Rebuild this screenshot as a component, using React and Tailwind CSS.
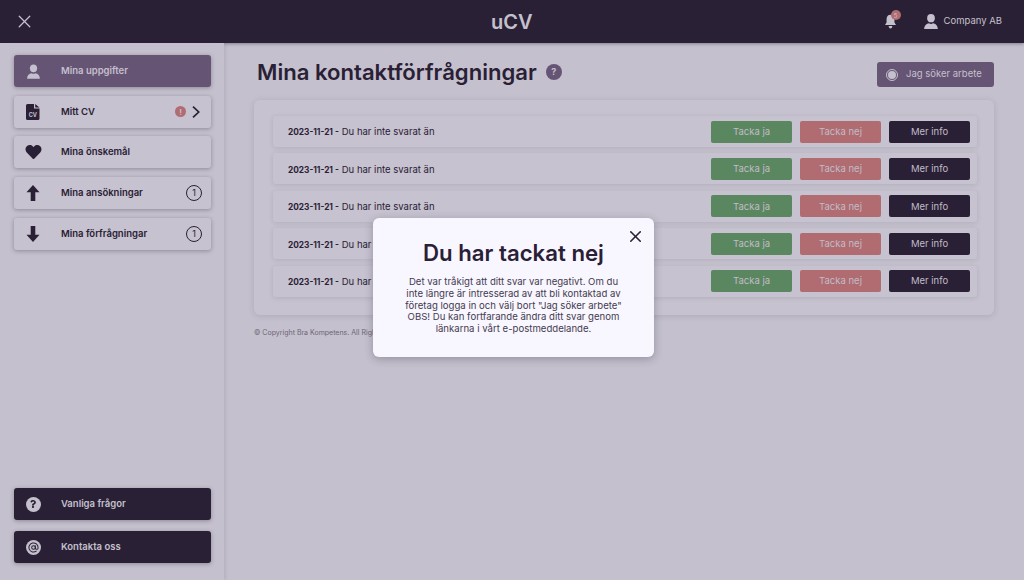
import { X, AtSign } from "lucide-react";
import { FaHeart, FaQuestion } from "react-icons/fa";

const PersonIcon = ({ className }) => (
  <svg viewBox="0 0 20 20" className={className} fill="currentColor">
    <ellipse cx="10" cy="5.8" rx="4.8" ry="5.2" />
    <path d="M1.500 19.500c0-4.600 3-7 6-7.300.6.5 1.500.8 2.500.8s1.900-.3 2.500-.8c3 .3 6 2.700 6 7.300z" />
  </svg>
);

const BellIcon = () => (
  <svg viewBox="0 0 12 16" className="w-[11px] h-[15px]" fill="currentColor">
    <path d="M6 .5c2.800 0 4.300 2.200 4.300 5v3.600L12 11.800H0l1.700-2.700V5.500C1.700 2.700 3.200.5 6 .5z" />
    <path d="M4 13h4c0 1.500-.8 2.500-2 2.500S4 14.500 4 13z" />
  </svg>
);

const CvIcon = () => (
  <svg viewBox="0 0 14 16" className="w-[14px] h-[16px]">
    <path d="M1.500 0H8v4.500h5.500V14.500a1.500 1.500 0 0 1-1.500 1.500H1.500A1.500 1.500 0 0 1 0 14.500V1.500A1.500 1.500 0 0 1 1.500 0z" fill="#2a2035" />
    <path d="M9.200 0l4.300 3.400H9.200z" fill="#2a2035" />
    <text x="6.800" y="13.400" fontSize="5.600" fontWeight="700" fill="#c4c0cd" textAnchor="middle" fontFamily="Inter, sans-serif">CV</text>
  </svg>
);

const ArrowUp = () => (
  <svg viewBox="0 0 14 16" className="w-[14px] h-[16px]" fill="currentColor">
    <path d="M7 0l6.500 7.300H9.300V16H4.700V7.300H.5z" />
  </svg>
);

const ArrowDown = () => (
  <svg viewBox="0 0 14 16" className="w-[14px] h-[16px]" fill="currentColor">
    <path d="M7 16L.5 8.700h4.200V0h4.600v8.700h4.200z" />
  </svg>
);

const Chevron = () => (
  <svg viewBox="0 0 8 12" className="w-[8px] h-[12px] ml-[6px] mr-[11px]" fill="none" stroke="currentColor" strokeWidth="1.700">
    <path d="M1 .7L6.700 6 1 11.300" />
  </svg>
);

const Count = () => (
  <span className="ml-auto mr-[9px] w-4 h-4 rounded-full border border-[#2a2035] flex items-center justify-center text-[9px] text-[#2a2035]">1</span>
);

const NavItem = ({ icon, label, children, dark, active }) => (
  <div
    className={`h-[32px] w-[197px] flex items-center rounded-[3px] shadow-[0_1px_4px_rgba(42,32,53,0.35)] ${
      active ? "bg-[#665474] text-[#c4c0cd]" : dark ? "bg-[#2a2035] text-[#c4c0cd]" : "bg-[#c6c2cf] text-[#2a2035]"
    }`}
  >
    <span className="w-[47px] flex items-center justify-center shrink-0 pr-[9px]">{icon}</span>
    <span className="text-[9.500px] font-semibold">{label}</span>
    {children}
  </div>
);

const Row = () => (
  <div className="h-[31px] flex items-center pl-[15px] pr-[7px] rounded-[3px] bg-[#c6c2cf] shadow-[0_1px_5px_rgba(42,32,53,0.12)]">
    <span className="text-[9.500px] text-[#2a2035] pt-[2px]">
      <b className="font-bold text-[8.300px] mr-[1px]">2023-11-21 - </b>Du har inte svarat än
    </span>
    <div className="ml-auto flex gap-[8px] text-[9.500px] text-[#c0bcc8]">
      <button className="w-[81px] h-[22px] pt-[1px] rounded-[2px] bg-[#5a875f]">Tacka ja</button>
      <button className="w-[81px] h-[22px] pt-[1px] rounded-[2px] bg-[#b06c70]">Tacka nej</button>
      <button className="w-[81px] h-[22px] pt-[1px] rounded-[2px] bg-[#2a2035]">Mer info</button>
    </div>
  </div>
);

export default function App() {
  return (
    <div className="relative w-[1024px] h-[580px] overflow-hidden bg-[#c4c0cd] font-['Inter',sans-serif] flex flex-col">
      <header className="h-[43px] shrink-0 bg-[#2a2035] flex items-center pl-[14px] pr-[22px] text-[#c4c0cd] shadow-[0_1px_3px_rgba(42,32,53,0.4)]">
        <X className="w-[21px] h-[21px]" strokeWidth={1.500} />
        <span className="absolute left-[491px] text-[20px] font-semibold">uCV</span>
        <div className="ml-auto relative mr-[27px]">
          <BellIcon />
          <span className="absolute -top-[4px] left-[6px] w-[10px] h-[10px] rounded-full bg-[#b06c70] text-[6px] flex items-center justify-center">5</span>
        </div>
        <PersonIcon className="w-[16px] h-[17px] mr-[5px]" />
        <span className="text-[9.500px]">Company AB</span>
      </header>

      <div className="flex-1 flex min-h-0">
        <aside className="w-[224px] shrink-0 bg-[#c4c0cd] shadow-[1px_0_4px_rgba(42,32,53,0.12)] pl-[14px] pt-[12px] pb-[17px] flex flex-col justify-between">
          <div className="flex flex-col gap-[8.700px]">
            <NavItem active label="Mina uppgifter" icon={<PersonIcon className="w-[15px] h-[17px] text-[#c4c0cd]" />} />
            <NavItem label="Mitt CV" icon={<CvIcon />}>
              <span className="ml-auto w-[11px] h-[11px] rounded-full bg-[#b06c70] text-[#c4c0cd] text-[8px] font-bold flex items-center justify-center">!</span>
              <Chevron />
            </NavItem>
            <NavItem label="Mina önskemål" icon={<FaHeart className="w-[17px] h-[16px]" />} />
            <NavItem label="Mina ansökningar" icon={<ArrowUp />}>
              <Count />
            </NavItem>
            <NavItem label="Mina förfrågningar" icon={<ArrowDown />}>
              <Count />
            </NavItem>
          </div>
          <div className="flex flex-col gap-[11px]">
            <NavItem
              dark
              label="Vanliga frågor"
              icon={
                <span className="w-[15px] h-[15px] rounded-full bg-[#c4c0cd] flex items-center justify-center">
                  <FaQuestion className="w-[8px] h-[8px] text-[#2a2035]" />
                </span>
              }
            />
            <NavItem
              dark
              label="Kontakta oss"
              icon={
                <span className="w-[15px] h-[15px] rounded-full bg-[#c4c0cd] flex items-center justify-center">
                  <AtSign className="w-[11px] h-[11px] text-[#2a2035]" strokeWidth={2.200} />
                </span>
              }
            />
          </div>
        </aside>

        <main className="flex-1 pl-[30px] pr-[30px]">
          <div className="h-[57px] flex items-start">
            <h1 className="mt-[15px] ml-[3px] text-[22.100px] leading-[28px] font-semibold text-[#2a2035]">Mina kontaktförfrågningar</h1>
            <span className="mt-[21px] ml-[9px] w-[16px] h-[16px] rounded-full bg-[#665474] text-[#c4c0cd] text-[9px] font-bold flex items-center justify-center">?</span>
            <button className="ml-auto mt-[19px] w-[117px] h-[25px] rounded-[3px] bg-[#665474] text-[#c4c0cd] text-[9.500px] flex items-center pl-[9px] gap-[8px]">
              <span className="w-[12px] h-[12px] rounded-full border border-[#c4c0cd] flex items-center justify-center">
                <span className="w-[8px] h-[8px] rounded-full bg-[#c4c0cd]" />
              </span>
              Jag söker arbete
            </button>
          </div>
          <section className="w-[740px] h-[215px] rounded-[6px] bg-[#c6c2cf] shadow-[0_1px_6px_rgba(42,32,53,0.14)] pt-[16px] pl-[19px] pr-[17px] flex flex-col gap-[6.400px]">
            <Row />
            <Row />
            <Row />
            <Row />
            <Row />
          </section>
          <p className="mt-[13px] text-[7px] text-[#6d6577]">© Copyright Bra Kompetens. All Rights Reserved</p>
        </main>
      </div>

      {/* modal */}
      <div className="absolute left-[373px] top-[218px] w-[281px] h-[139px] rounded-[6px] bg-[#f8f6ff] shadow-[0_2px_8px_rgba(42,32,53,0.3)] px-[30px] pt-[22px] text-center text-[#2a2035]">
        <X className="absolute right-[9px] top-[9px] w-[19px] h-[19px]" strokeWidth={2} />
        <h2 className="text-[22.200px] leading-[26px] font-semibold">Du har tackat nej</h2>
        <p className="mt-[10px] text-[9.600px] leading-[11.800px] text-[#443b4f] -mx-[10px]">
          Det var tråkigt att ditt svar var negativt. Om du
          <br />
          inte längre är intresserad av att bli kontaktad av
          <br />
          företag logga in och välj bort "Jag söker arbete"
          <br />
          OBS! Du kan fortfarande ändra ditt svar genom
          <br />
          länkarna i vårt e-postmeddelande.
        </p>
      </div>
    </div>
  );
}
